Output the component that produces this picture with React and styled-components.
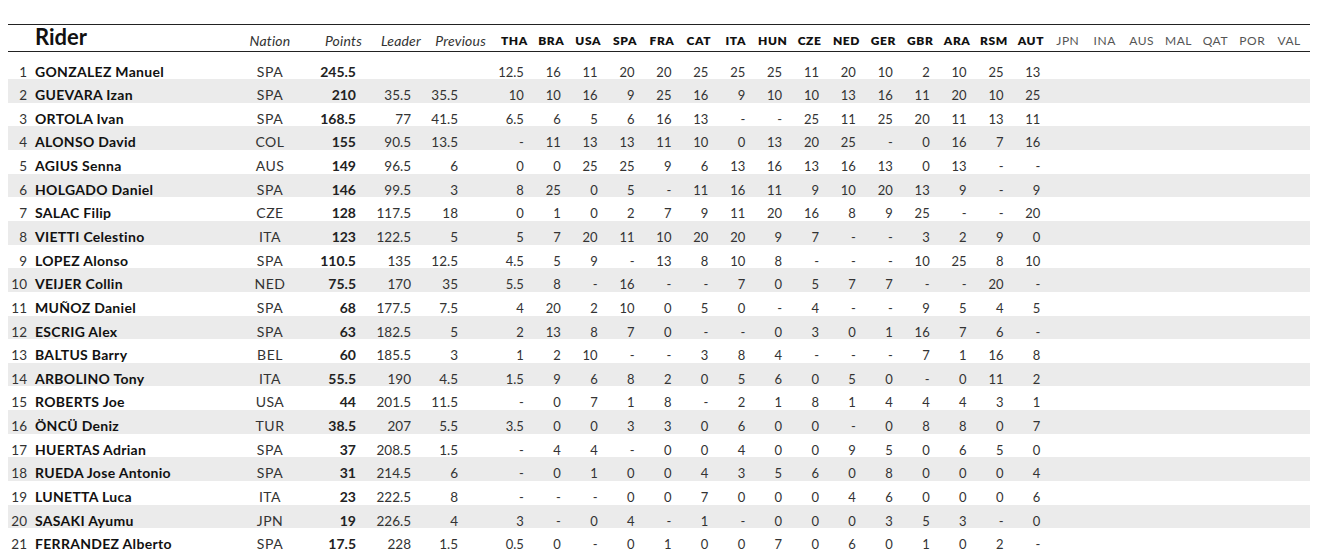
import React from "react";
import styled, { createGlobalStyle } from "styled-components";

const GlobalStyle = createGlobalStyle`
  body {
    margin: 8px;
    background: #ffffff;
    font-family: "Lato", "Noto Sans", sans-serif;
    color: #222;
  }
`;

const RACES = ["THA","BRA","USA","SPA","FRA","CAT","ITA","HUN","CZE","NED","GER","GBR","ARA","RSM","AUT","JPN","INA","AUS","MAL","QAT","POR","VAL"];
const HELD = 15;

const RAW = [
  ["GONZALEZ Manuel","SPA","245.5","","","12.5 16 11 20 20 25 25 25 11 20 10 2 10 25 13"],
  ["GUEVARA Izan","SPA","210","35.5","35.5","10 10 16 9 25 16 9 10 10 13 16 11 20 10 25"],
  ["ORTOLA Ivan","SPA","168.5","77","41.5","6.5 6 5 6 16 13 - - 25 11 25 20 11 13 11"],
  ["ALONSO David","COL","155","90.5","13.5","- 11 13 13 11 10 0 13 20 25 - 0 16 7 16"],
  ["AGIUS Senna","AUS","149","96.5","6","0 0 25 25 9 6 13 16 13 16 13 0 13 - -"],
  ["HOLGADO Daniel","SPA","146","99.5","3","8 25 0 5 - 11 16 11 9 10 20 13 9 - 9"],
  ["SALAC Filip","CZE","128","117.5","18","0 1 0 2 7 9 11 20 16 8 9 25 - - 20"],
  ["VIETTI Celestino","ITA","123","122.5","5","5 7 20 11 10 20 20 9 7 - - 3 2 9 0"],
  ["LOPEZ Alonso","SPA","110.5","135","12.5","4.5 5 9 - 13 8 10 8 - - - 10 25 8 10"],
  ["VEIJER Collin","NED","75.5","170","35","5.5 8 - 16 - - 7 0 5 7 7 - - 20 -"],
  ["MUÑOZ Daniel","SPA","68","177.5","7.5","4 20 2 10 0 5 0 - 4 - - 9 5 4 5"],
  ["ESCRIG Alex","SPA","63","182.5","5","2 13 8 7 0 - - 0 3 0 1 16 7 6 -"],
  ["BALTUS Barry","BEL","60","185.5","3","1 2 10 - - 3 8 4 - - - 7 1 16 8"],
  ["ARBOLINO Tony","ITA","55.5","190","4.5","1.5 9 6 8 2 0 5 6 0 5 0 - 0 11 2"],
  ["ROBERTS Joe","USA","44","201.5","11.5","- 0 7 1 8 - 2 1 8 1 4 4 4 3 1"],
  ["ÖNCÜ Deniz","TUR","38.5","207","5.5","3.5 0 0 3 3 0 6 0 0 - 0 8 8 0 7"],
  ["HUERTAS Adrian","SPA","37","208.5","1.5","- 4 4 - 0 0 4 0 0 9 5 0 6 5 0"],
  ["RUEDA Jose Antonio","SPA","31","214.5","6","- 0 1 0 0 4 3 5 6 0 8 0 0 0 4"],
  ["LUNETTA Luca","ITA","23","222.5","8","- - - 0 0 7 0 0 0 4 6 0 0 0 6"],
  ["SASAKI Ayumu","JPN","19","226.5","4","3 - 0 4 - 1 - 0 0 0 3 5 3 - 0"],
  ["FERRANDEZ Alberto","SPA","17.5","228","1.5","0.5 0 - 0 1 0 0 7 0 6 0 1 0 2 -"],
];

const COLS = "22px 210px 60px 64px 60px 72px repeat(22, 36.9px)";

const Page = styled.div`
  padding-top: 16px;
`;

const Table = styled.div`
  width: 1302px;
`;

const HeaderRow = styled.div`
  display: grid;
  grid-template-columns: ${COLS};
  align-items: end;
  height: 27.5px;
  border-top: 1px solid #222;
  border-bottom: 1.5px solid #222;
  box-sizing: border-box;
  padding-bottom: 2px;
  margin-bottom: 4px;
`;

const RiderHead = styled.div`
  grid-column: 1 / span 2;
  padding-left: 27px;
  font-size: 22px;
  font-weight: 700;
  color: #111;
  line-height: 24px;
`;

const ItalicHead = styled.div`
  font-size: 14px;
  font-style: italic;
  color: #333;
  letter-spacing: 0.2px;
  text-align: ${(p) => p.$align || "right"};
  padding-right: ${(p) => p.$pr || 0}px;
  line-height: 17px;
  white-space: nowrap;
`;

const RaceHead = styled.div`
  font-size: 12px;
  font-weight: ${(p) => (p.$held ? 800 : 400)};
  color: ${(p) => (p.$held ? "#111" : "#555")};
  text-align: center;
  line-height: 16px;
  letter-spacing: ${(p) => (p.$held ? "0.6px" : "0.5px")};
`;

const Row = styled.div`
  display: grid;
  grid-template-columns: ${COLS};
  height: 23.65px;
  box-sizing: border-box;
  padding-top: 8px;
  line-height: 16px;
  font-size: 13px;
  color: #333;
  background: ${(p) => (p.$striped ? "#ebebeb" : "transparent")};
`;

const Rank = styled.div`
  text-align: right;
  padding-right: 3px;
  font-size: 13.5px;
  color: #333;
`;

const Name = styled.div`
  padding-left: 5px;
  font-size: 14px;
  font-weight: 700;
  letter-spacing: 0.3px;
  color: #111;
  white-space: nowrap;
`;

const Nation = styled.div`
  text-align: center;
  font-size: 14px;
  letter-spacing: 0.5px;
`;

const Num = styled.div`
  text-align: right;
  padding-right: ${(p) => p.$pr}px;
  font-weight: ${(p) => (p.$bold ? 700 : 400)};
  color: ${(p) => (p.$bold ? "#222" : "#333")};
  font-size: ${(p) => (p.$bold ? "14px" : "13.5px")};
`;

const RaceCell = styled.div`
  text-align: right;
  padding-right: 9px;
`;

export default function App() {
  return (
    <Page>
      <GlobalStyle />
      <Table>
        <HeaderRow>
          <RiderHead>Rider</RiderHead>
          <ItalicHead $align="center">Nation</ItalicHead>
          <ItalicHead $pr={2}>Points</ItalicHead>
          <ItalicHead $pr={3}>Leader</ItalicHead>
          <ItalicHead $pr={10}>Previous</ItalicHead>
          {RACES.map((r, i) => (
            <RaceHead key={r} $held={i < HELD}>{r}</RaceHead>
          ))}
        </HeaderRow>
        {RAW.map((row, i) => {
          const races = row[5].split(" ");
          return (
            <Row key={row[0]} $striped={i % 2 === 1}>
              <Rank>{i + 1}</Rank>
              <Name>{row[0]}</Name>
              <Nation>{row[1]}</Nation>
              <Num $pr={8} $bold>{row[2]}</Num>
              <Num $pr={13}>{row[3]}</Num>
              <Num $pr={38}>{row[4]}</Num>
              {RACES.map((r, j) => (
                <RaceCell key={r}>{j < races.length ? races[j] : ""}</RaceCell>
              ))}
            </Row>
          );
        })}
      </Table>
    </Page>
  );
}
